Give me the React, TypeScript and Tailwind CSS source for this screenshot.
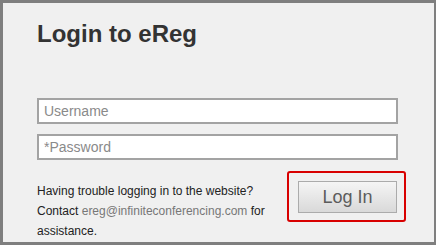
export default function App() {
  return (
    <div className="w-[439px] h-[247px] bg-white font-['Liberation_Sans',Arial,sans-serif]">
      <div className="w-[436px] h-[245px] border-t-[3px] border-l-[3px] border-r-2 border-b-[3px] border-[#7f7f7f] bg-[#f0f0f0] pl-[34px] pt-[17px]">
        <h1 className="text-[24px] leading-[28px] font-bold text-[#333333]">Login to eReg</h1>

        <div className="mt-[50px] flex flex-col gap-[10px] w-[361px]">
          <input
            placeholder="Username"
            className="h-[26px] w-full border-2 border-[#a3a3a3] bg-white pl-[5px] text-[14px] text-[#333] placeholder:text-[#8a8a8a] outline-none"
          />
          <input
            type="password"
            placeholder="*Password"
            className="h-[26px] w-full border-2 border-[#a3a3a3] bg-white pl-[5px] text-[14px] text-[#333] placeholder:text-[#8a8a8a] outline-none"
          />
        </div>

        <div className="mt-[11px] flex items-start justify-between w-[369px]">
          <p className="mt-[10px] w-[240px] text-[12px] leading-[20px] text-[#222222]">
            Having trouble logging in to the website? Contact{" "}
            <a className="text-[#777777]">ereg@infiniteconferencing.com</a> for assistance.
          </p>
          <div className="w-[119px] h-[51px] rounded-[3px] border-2 border-[#d80000] pl-[9px] pt-[8px]">
            <button className="w-[99px] h-[32px] border border-[#ababab] bg-gradient-to-b from-[#f5f5f5] to-[#d9d9d9] text-[18px] leading-[30px] text-[#5c5c5c]">
              Log In
            </button>
          </div>
        </div>
      </div>
    </div>
  );
}
